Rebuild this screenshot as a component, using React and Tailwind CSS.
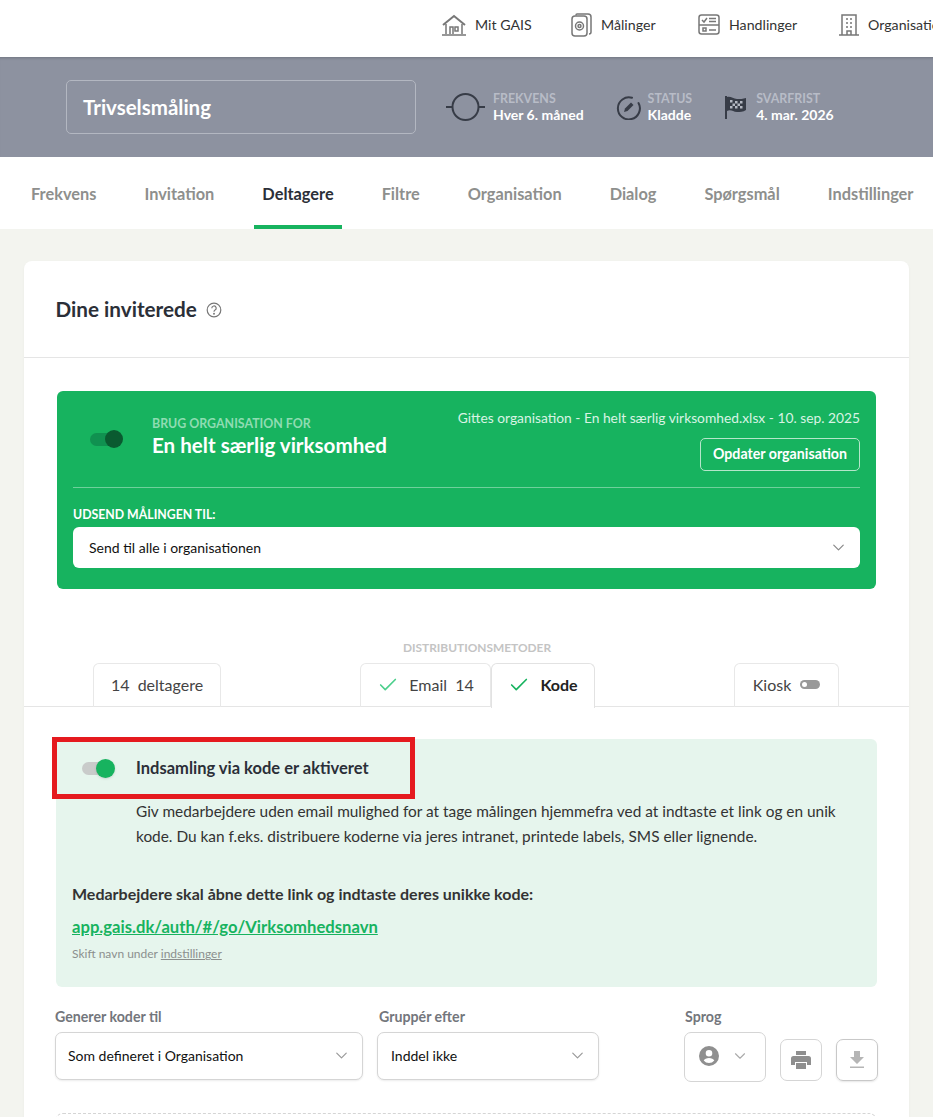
import React from "react";
import { ChevronDown, Check } from "lucide-react";

const Toggle = ({ track, knob }) => (
  <div className="relative w-[33px] h-[20px] shrink-0">
    <div className={`absolute left-0 top-[3px] w-[30px] h-[13px] rounded-full ${track}`} />
    <div className={`absolute left-[14px] top-0 w-[19px] h-[19px] rounded-full shadow-sm ${knob}`} />
  </div>
);

const NavItem = ({ icon, label, w }) => (
  <div className={`flex items-center gap-[9px] shrink-0 ${w}`}>
    {icon}
    <span className="text-[14.2px] text-[#333] whitespace-nowrap">{label}</span>
  </div>
);

const Stat = ({ icon, label, value, gap }) => (
  <div className={`flex items-center shrink-0 ${gap}`}>
    {icon}
    <div className="leading-none pt-[3px]">
      <div className="text-[12.400px] font-bold text-[#b8bcc7] leading-[13px]">{label}</div>
      <div className="text-[14px] font-bold text-white leading-[20px]">{value}</div>
    </div>
  </div>
);

const Tab = ({ label, active }) => (
  <div className={`h-full flex items-center justify-center shrink-0 relative pt-[3px] ${active ? "text-[#2b2f38] font-bold" : "text-[#8e8f8d] font-bold"}`}>
    <span className="text-[16.350px] whitespace-nowrap">{label}</span>
    {active && <div className="absolute -left-[8px] -right-[8px] bottom-0 h-[4px] bg-[#17b35f]" />}
  </div>
);

const Select = ({ label, value, w, pad, labelPad }) => (
  <div className={`${w} shrink-0`}>
    <div className={`text-[14.200px] font-bold text-[#73767c] leading-[17px] mb-[7px] ${labelPad}`}>{label}</div>
    <div className={`h-[48px] border border-[#d5d5d5] rounded-[7px] shadow-[0_1px_2px_rgba(0,0,0,0.08)] flex items-center justify-between ${pad} pr-[11px] pb-[2px] bg-white`}>
      <span className="text-[14px] text-[#111] whitespace-nowrap">{value}</span>
      <ChevronDown size={19} strokeWidth={1.5} className="text-[#999]" />
    </div>
  </div>
);

export default function App() {
  return (
    <div className="h-[1117px] w-[933px] overflow-hidden bg-[#f3f4ef] font-['Lato','Liberation_Sans',sans-serif]">
      <nav className="h-[57px] bg-white flex items-center pl-[442px] pb-[7px] overflow-hidden">
        <NavItem w="w-[129px]" label="Mit GAIS" icon={
          <svg width="24" height="22" viewBox="0 0 24 22" fill="none" stroke="#777" strokeWidth="1.5"><path d="M1 11 12 2l11 9" strokeWidth="2"/><path d="M4 10v10M20 10v10M0 21h24"/><path d="M8 20v-7h3v7M13 13h3v4h-3z"/></svg>
        } />
        <NavItem w="w-[127px]" label="Målinger" icon={
          <svg width="21" height="24" viewBox="0 0 21 24" fill="none" stroke="#777" strokeWidth="1.5"><rect x="1" y="3" width="15" height="20" rx="3"/><path d="M5 2.500V2a1 1 0 0 1 1-1h11a3 3 0 0 1 3 3v15a2 2 0 0 1-2 2"/><circle cx="8.500" cy="13" r="4"/><circle cx="8.500" cy="13" r="1.500"/></svg>
        } />
        <NavItem w="w-[141px]" label="Handlinger" icon={
          <svg width="22" height="21" viewBox="0 0 22 21" fill="none" stroke="#777" strokeWidth="1.5"><rect x="1" y="1" width="20" height="19" rx="2.500"/><path d="M1 11h20"/><path d="m4 6 2 2 3-4M11 4.500h7M11 7.500h7M5 14h3v3H5zM11 16h7"/></svg>
        } />
        <NavItem w="w-[120px]" label="Organisation" icon={
          <svg width="20" height="22" viewBox="0 0 20 22" fill="none" stroke="#777" strokeWidth="1.5"><path d="M3 21V1h14v20M0 21h20"/><path d="M7 5h2M11 5h2M7 9h2M11 9h2M7 13h2M11 13h2M8 21v-4h4v4" /></svg>
        } />
      </nav>

      <header className="h-[100px] bg-[#8d92a0] shadow-[inset_0_3px_3px_-2px_rgba(0,0,0,0.2)] flex items-center pl-[66px]">
        <div className="w-[350px] h-[54px] border border-[#b3b7c1] rounded-[5px] flex items-center pl-[16px] mr-[30px] shrink-0">
          <span className="text-[20.500px] font-bold text-white">Trivselsmåling</span>
        </div>
        <Stat gap="gap-[8px] mr-[32px]" label="FREKVENS" value="Hver 6. måned" icon={
          <svg width="39" height="30" viewBox="0 0 39 30" fill="none" stroke="#373c47" strokeWidth="2"><circle cx="19.500" cy="15" r="13"/><path d="M0 15h6M33 15h6"/></svg>
        } />
        <Stat gap="gap-[7px] mr-[32px]" label="STATUS" value="Kladde" icon={
          <svg width="25" height="25" viewBox="0 0 25 25" fill="none"><path d="M16 2.800A11 11 0 1 0 22.500 8" stroke="#373c47" strokeWidth="2" strokeLinecap="round"/><path d="m8 17 1-3.500 6-6 2.500 2.500-6 6z" fill="#373c47"/></svg>
        } />
        <Stat gap="gap-[9px]" label="SVARFRIST" value="4. mar. 2026" icon={
          <svg width="23" height="24" viewBox="0 0 23 24" fill="none"><path d="M2 1v23" stroke="#373c47" strokeWidth="2"/><path d="M3 2c4-1 6 2 10 2 3 0 6 0 9-1v12c-3 2-6 2-9 2-4 0-6-3-10-1z" fill="#373c47"/><path d="M6 5h2.500v2.500H6zM11 6h2.500v2.500H11zM16 6h2.500v2.500H16zM8.500 8.500H11V11H8.500zM13.500 8.500H16V11h-2.500zM6 11h2.500v2.500H6zM11 11h2.500v2.500H11zM16 11h2.500v2.500H16z" fill="#b4b8c2"/></svg>
        } />
      </header>

      <div className="h-[72px] bg-white flex pl-[31px] gap-[48px] overflow-hidden">
        <Tab label="Frekvens" />
        <Tab label="Invitation" />
        <Tab label="Deltagere" active />
        <Tab label="Filtre" />
        <Tab label="Organisation" />
        <Tab label="Dialog" />
        <Tab label="Spørgsmål" />
        <Tab label="Indstillinger" />
      </div>

      <main className="pt-[32px] pl-[24px]">
        <section className="relative w-[885px] bg-white rounded-[8px] shadow-[0_1px_3px_rgba(0,0,0,0.04)]">
          <div className="h-[97px] border-b border-[#e5e5e5] flex items-center pl-[31.500px] pt-[2px] gap-[9px]">
            <h1 className="text-[20.700px] font-bold text-[#2b2f38]">Dine inviterede</h1>
            <svg width="16" height="16" viewBox="0 0 16 16" fill="none" stroke="#777" strokeWidth="1.2"><circle cx="8" cy="8" r="6.800"/><path d="M5.800 6.200a2.200 2.200 0 1 1 3.300 1.900c-.7.4-1.100.8-1.100 1.600"/><circle cx="8" cy="11.700" r=".4" fill="#777"/></svg>
          </div>

          <div className="mt-[33px] ml-[33px] w-[819px] h-[198px] bg-[#17b35f] rounded-[6px] px-[16px] text-white">
            <div className="h-[97px] border-b border-[#6fd09b] flex justify-between">
              <div className="flex pt-[26px] pl-[17px]">
                <div className="relative w-[34px] h-[20px] shrink-0 mt-[13px] mr-[29px]">
                  <div className="absolute left-0 top-[3px] w-[30px] h-[13px] rounded-full bg-[#109150]" />
                  <div className="absolute left-[15px] top-0 w-[18px] h-[18px] rounded-full bg-[#0a5a30]" />
                </div>
                <div className="-ml-[1px]">
                  <div className="text-[12.400px] font-bold text-[#8fdcb2] leading-[14px]">BRUG ORGANISATION FOR</div>
                  <div className="text-[20.600px] font-bold leading-[28px]">En helt særlig virksomhed</div>
                </div>
              </div>
              <div className="flex flex-col items-end pt-[18px]">
                <div className="text-[13.800px] text-[#d9f3e4] leading-[17px] whitespace-nowrap">Gittes organisation - En helt særlig virksomhed.xlsx - 10. sep. 2025</div>
                <div className="mt-[12px] w-[160px] h-[33px] border border-[#b5e6ca] rounded-[5px] flex items-center justify-center text-[14.200px] font-bold pb-[1px]">Opdater organisation</div>
              </div>
            </div>
            <div className="text-[12.300px] font-bold leading-[14px] mt-[20px]">UDSEND MÅLINGEN TIL:</div>
            <div className="mt-[5px] h-[41px] bg-white rounded-[6px] flex items-center justify-between pl-[16px] pr-[12px] pb-[1px]">
              <span className="text-[14px] text-[#111]">Send til alle i organisationen</span>
              <ChevronDown size={19} strokeWidth={1.5} className="text-[#888]" />
            </div>
          </div>

          <div className="mt-[52px] h-[14px] text-center pl-[21px] text-[11.900px] font-bold text-[#c4c4c4] leading-[14px]">DISTRIBUTIONSMETODER</div>

          <div className="mt-[8px] h-[44px] border-b border-[#e5e5e5] flex pl-[69px] items-stretch">
            <div className="w-[128px] h-[44px] border border-b-0 border-[#e8e8e8] rounded-t-[6px] flex items-center justify-center text-[16px] text-[#444] shrink-0 pb-[2px]">14&nbsp; deltagere</div>
            <div className="ml-[139px] w-[131px] h-[44px] border border-b-0 border-[#e8e8e8] rounded-t-[6px] flex items-center justify-center gap-[10px] text-[16px] text-[#444] shrink-0 pb-[2px]">
              <Check size={22} strokeWidth={1.8} className="text-[#4ccf8c]" /><span>Email&nbsp; 14</span>
            </div>
            <div className="w-[104px] h-[45px] bg-white border border-b-0 border-[#e2e2e2] rounded-t-[6px] flex items-center justify-center gap-[10px] text-[16px] font-bold text-[#222] shrink-0 relative z-10 pb-[2px]">
              <Check size={22} strokeWidth={1.8} className="text-[#17b35f]" /><span>Kode</span>
            </div>
            <div className="ml-[139px] w-[105px] h-[44px] border border-b-0 border-[#e8e8e8] rounded-t-[6px] flex items-center justify-center gap-[9px] text-[16px] text-[#444] shrink-0 pb-[2px]">
              <span>Kiosk</span>
              <div className="relative w-[20px] h-[9px] rounded-full bg-[#999]"><div className="absolute left-[2px] top-[2px] w-[5px] h-[5px] rounded-full bg-white" /></div>
            </div>
          </div>

          <div className="relative mt-[32px] ml-[32px] w-[821px] h-[248px] bg-[#e6f5ed] rounded-[6px]">
            <div className="flex items-start pt-[19px] pl-[26px]">
              <div className="w-[54px] shrink-0 pt-[1px]"><Toggle track="bg-[#c9cbca]" knob="bg-[#17b35f]" /></div>
              <div className="text-[16.500px] font-bold text-[#2b2f38] leading-[20px]">Indsamling via kode er aktiveret</div>
            </div>
            <p className="ml-[80px] mt-[20px] w-[730px] text-[15.400px] leading-[25px] text-[#333]">Giv medarbejdere uden email mulighed for at tage målingen hjemmefra ved at indtaste et link og en unik kode. Du kan f.eks. distribuere koderne via jeres intranet, printede labels, SMS eller lignende.</p>
            <div className="ml-[16px] mt-[35px] text-[16px] font-bold text-[#333] leading-[20px]">Medarbejdere skal åbne dette link og indtaste deres unikke kode:</div>
            <div className="ml-[16px] mt-[13px] text-[16.650px] font-bold text-[#17b35f] underline leading-[20px]">app.gais.dk/auth/#/go/Virksomhedsnavn</div>
            <div className="ml-[16px] mt-[10px] text-[12px] text-[#8b8f8d] leading-[14px]">Skift navn under <span className="underline">indstillinger</span></div>
            <div className="absolute -left-[4px] -top-[2px] w-[363px] h-[62px] border-[5px] border-[#e51a1f]" />
          </div>

          <div className="mt-[21px] ml-[31px] flex items-start">
            <Select w="w-[308px]" pad="pl-[12px]" label="Generer koder til" value="Som defineret i Organisation" />
            <Select w="w-[222px] ml-[14px]" pad="pl-[13px]" labelPad="pl-[2px]" label="Gruppér efter" value="Inddel ikke" />
            <div className="ml-[85px] w-[82px] shrink-0">
              <div className="text-[14.200px] font-bold text-[#73767c] leading-[17px] mb-[7px] pl-[1px]">Sprog</div>
              <div className="h-[50px] border border-[#d5d5d5] rounded-[7px] flex items-center pl-[14px] gap-[12px] pb-[2px]">
                <svg width="20" height="20" viewBox="0 0 20 20" fill="#8f8f8f"><path fillRule="evenodd" d="M10 0a10 10 0 1 1 0 20 10 10 0 0 1 0-20Zm0 4a3.300 3.300 0 1 0 0 6.600A3.300 3.300 0 0 0 10 4Zm0 8c-2.500 0-4.500 1-5.300 2.400a6.800 6.800 0 0 0 10.600 0C14.500 13 12.500 12 10 12Z"/></svg>
                <ChevronDown size={18} strokeWidth={1.5} className="text-[#aaa]" />
              </div>
            </div>
            <div className="ml-[14px] mt-[31px] w-[42px] h-[42px] border border-[#d5d5d5] rounded-[7px] flex items-center justify-center shrink-0">
              <svg width="20" height="18" viewBox="0 0 20 18" fill="#8f8f8f"><path d="M5 0h10v4H5zM2.500 5h15A2.500 2.500 0 0 1 20 7.500V14h-4v-3H4v3H0V7.500A2.500 2.500 0 0 1 2.500 5Z"/><path d="M5 12h10v6H5z"/></svg>
            </div>
            <div className="ml-[14px] mt-[31px] w-[42px] h-[42px] border border-[#c8c8c8] rounded-[7px] shadow-[0_1px_2px_rgba(0,0,0,0.1)] flex items-center justify-center shrink-0">
              <svg width="16" height="18" viewBox="0 0 16 18" fill="#b5b5b5"><path d="M5 0h6v6h4l-7 7-7-7h4z"/><path d="M1 15.500h14V17H1z"/></svg>
            </div>
          </div>

          <div className="mt-[31px] ml-[31px] w-[822px] h-[60px] border border-dashed border-[#d5d5d5] rounded-[8px]" />
        </section>
      </main>
    </div>
  );
}
